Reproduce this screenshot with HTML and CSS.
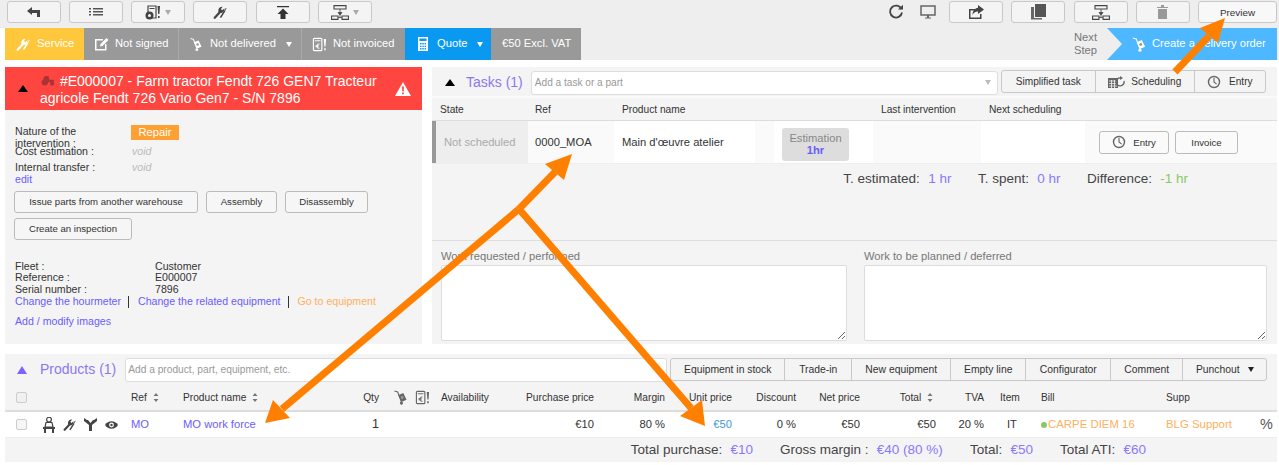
FILE: index.html
```html
<!DOCTYPE html>
<html lang="en">
<head>
    <meta charset="UTF-8">
    <title>Service E000007</title>
    <link rel="stylesheet" href="styles.css">
</head>
<body>
<svg class="defs" width="0" height="0">
    <symbol id="i-service" viewBox="0 0 16 16">
        <path d="M2 14.5 L8 8" fill="none" stroke="currentColor" stroke-width="2.6" stroke-linecap="round"/>
        <path d="M6.6 9 C5 5 7.5 1.5 11 2 L9 4.5 L10.5 6 L13 4 C13.5 7.5 10.5 10 6.6 9Z" fill="currentColor"/>
        <path d="M8.5 14.5 L13.5 6.5" fill="none" stroke="currentColor" stroke-width="1.8"/>
        <path d="M13.5 6.5 L15 3.5" fill="none" stroke="currentColor" stroke-width="1"/>
    </symbol>
    <symbol id="i-trolley" viewBox="1 0 14 16">
        <path d="M1.5 1 L5 2 L9 12.5" fill="none" stroke="currentColor" stroke-width="1.2"/>
        <path d="M5.5 5.5 L11 3.2 L14.5 10.5 L9 12.8Z" fill="currentColor"/>
        <circle cx="9.8" cy="8" r="1.5" fill="#999999"/>
        <circle cx="9" cy="14" r="1.7" fill="currentColor"/>
    </symbol>
    <symbol id="i-invoice" viewBox="0 0 16 16">
        <rect x="1.5" y="1.5" width="9" height="13" rx="1" fill="none" stroke="currentColor" stroke-width="1.2"/>
        <path d="M3 4 H9" stroke="currentColor"/>
        <path d="M8 7.5 A2.3 2.3 0 1 0 8 12 M3.8 9.2 H7 M3.8 10.4 H7" fill="none" stroke="currentColor"/>
        <path d="M12.5 2 H15 L14.4 10 H13.2Z M13 12 H14.6 V14 H13Z" fill="currentColor"/>
    </symbol>
    <symbol id="i-clock" viewBox="0 0 16 16">
        <circle cx="8" cy="8" r="6.3" fill="none" stroke="currentColor" stroke-width="1.6"/>
        <path d="M8 3.5 V8 L11 10.5" fill="none" stroke="currentColor" stroke-width="1.3"/>
    </symbol>
    <symbol id="i-flow" viewBox="0 0 18 15">
        <path d="M3 .6 H15 V4 H3Z M.6 11 H7 V14.4 H.6Z M11 11 H17.4 V14.4 H11Z" fill="none" stroke="currentColor" stroke-width="1.1"/>
        <path d="M9 4 V7 M7 7.5 H11 L9 10Z M9 10 V12.5 M7 12.5 H11" fill="currentColor" stroke="currentColor" stroke-width=".8"/>
    </symbol>
    <symbol id="i-sort" viewBox="0 0 6 9">
        <path d="M3 0 L5.5 3 H.5Z M3 9 L.5 6 H5.5Z" fill="currentColor"/>
    </symbol>
</svg>

<div class="toolbar">
    <button class="tool"><svg width="14" height="10" viewBox="0 0 14 10"><path d="M0 4 L5 0 V3 H13 V10 H10 V6 H5 V8Z" fill="#444"/></svg></button>
    <button class="tool"><svg width="14" height="8" viewBox="0 0 14 8"><path d="M0 0 H2 V1.5 H0Z M0 3 H2 V4.5 H0Z M0 6 H2 V7.5 H0Z M4 0 H14 V1.5 H4Z M4 3 H14 V4.5 H4Z M4 6 H14 V7.5 H4Z" fill="#555"/></svg></button>
    <button class="tool"><svg width="16" height="15" viewBox="0 0 16 15"><path d="M3 1 H11 V13 H3Z" fill="none" stroke="#444" stroke-width="1.2"/><path d="M4.5 3 H9.5 V4 H4.5Z M12.5 1 H15 L14.4 9 H13.2Z M13 11 H14.6 V13 H13Z" fill="#444"/><circle cx="4.5" cy="10.5" r="4" fill="#444"/><circle cx="4.5" cy="10.5" r="1.5" fill="#F4F4F4"/></svg><span class="caret"></span></button>
    <button class="tool"><svg class="ic-dark" width="14" height="14"><use href="#i-service"/></svg></button>
    <button class="tool"><svg width="12" height="13" viewBox="0 0 12 13"><path d="M0 0 H12 V1.2 H0Z M6 2.5 L11.5 8 H8.5 V13 H3.5 V8 H.5Z" fill="#333"/></svg></button>
    <button class="tool"><svg class="ic-dark" width="18" height="15"><use href="#i-flow"/></svg><span class="caret"></span></button>
    <div class="tool-right">
        <svg class="plain" width="16" height="16" viewBox="0 0 16 16"><path d="M13.5 5 A6 6 0 1 0 14 8.5" fill="none" stroke="#444" stroke-width="1.8"/><path d="M10 5.5 H15 V.8Z" fill="#444"/></svg>
        <svg class="plain" width="16" height="14" viewBox="0 0 16 14"><path d="M1 1 H15 V10 H1Z" fill="none" stroke="#666" stroke-width="1.5"/><path d="M5 12.5 H11 V13.5 H5Z M7 10 H9 V12.5 H7Z" fill="#666"/></svg>
        <button class="tool"><svg width="16" height="14" viewBox="0 0 16 14"><path d="M1 4 H7 V5.5 H2.5 V12.5 H12 V9 H13.5 V14 H1Z" fill="#444"/><path d="M10 0 L16 4.5 L10 9 V6.5 C7 6.5 5.5 8 4.5 10 C4.5 6 7 3 10 2.7Z" fill="#444"/></svg></button>
        <button class="tool"><svg width="17" height="16" viewBox="0 0 17 16"><path d="M5 0 H16 V13 H5Z" fill="#555"/><path d="M1 3 H4 V14 H12 V15.5 H1Z" fill="#666"/></svg></button>
        <button class="tool"><svg class="ic-dark" width="18" height="15"><use href="#i-flow"/></svg></button>
        <button class="tool"><svg width="11" height="14" viewBox="0 0 11 14"><path d="M0 2 H11 V3 H0Z M4 0 H7 V2 H4Z M1 4 H10 V14 H1Z" fill="#999"/></svg></button>
        <button class="tool tool-text">Preview</button>
    </div>
</div>

<div class="status">
    <div class="st st-service"><svg class="st-ic" width="14" height="14"><use href="#i-service"/></svg>Service</div>
    <div class="st st-sign"><svg class="st-ic" width="15" height="14" viewBox="0 0 15 14"><path d="M1 2 H9 V3.5 H2.5 V12 H11 V7 H12.5 V13.5 H1Z" fill="currentColor"/><path d="M6 9.5 L6.5 7 L12.5 1 L14.5 3 L8.5 9Z" fill="currentColor"/></svg>Not signed</div>
    <div class="st st-deliv"><svg class="st-ic" width="12" height="15"><use href="#i-trolley"/></svg>Not delivered<span class="caret-white"></span></div>
    <div class="st st-inv"><svg class="st-ic" width="15" height="15"><use href="#i-invoice"/></svg>Not invoiced</div>
    <div class="st st-quote"><svg class="st-ic" width="10" height="14" viewBox="0 0 10 14"><path d="M0 0 H10 V14 H0Z" fill="currentColor"/><path d="M1.5 1.5 H8.5 V4 H1.5Z M2 6 H3.5 V7.5 H2Z M4.3 6 H5.8 V7.5 H4.3Z M6.6 6 H8 V7.5 H6.6Z M2 8.7 H3.5 V10 H2Z M4.3 8.7 H5.8 V10 H4.3Z M6.6 8.7 H8 V10 H6.6Z M2 11 H3.5 V12.5 H2Z M4.3 11 H5.8 V12.5 H4.3Z M6.6 11 H8 V12.5 H6.6Z" fill="#0a99f0"/></svg>Quote<span class="caret-white"></span></div>
    <div class="st st-price">€50 Excl. VAT</div>
    <div class="next-label">Next<br>Step</div>
    <div class="next-step"><svg class="st-ic" width="14" height="15"><use href="#i-trolley"/></svg>Create a delivery order</div>
</div>

<div class="main">
    <section class="equip">
        <div class="equip-title">
            <span class="tri tri-black"></span>
            <h1><svg class="tractor" width="14" height="10" viewBox="0 0 15 11"><circle cx="4" cy="7" r="3.5" fill="#a33"/><circle cx="12" cy="8.5" r="2.3" fill="#a33"/><path d="M2 3 L4 0 H8 L9 4 H14 V7 H6Z" fill="#a33"/></svg> #E000007 - Farm tractor Fendt 726 GEN7 Tracteur agricole Fendt 726 Vario Gen7 - S/N 7896</h1>
            <svg class="warn" width="16" height="14" viewBox="0 0 16 14"><path d="M8 0 L16 14 H0Z" fill="#fff"/><path d="M7 4.5 H9 L8.7 9.5 H7.3Z M7.1 10.5 H8.9 V12.2 H7.1Z" fill="#ff4540"/></svg>
        </div>
        <div class="equip-body">
            <div class="info-row info-nature"><span class="info-label">Nature of the intervention :</span><span class="tag">Repair</span></div>
            <div class="info-row info-cost"><span class="info-label">Cost estimation :</span><em>void</em></div>
            <div class="info-row info-transfer"><span class="info-label">Internal transfer :</span><em>void</em></div>
            <a class="link edit" href="#">edit</a>
            <div class="btn-line">
                <button class="btn btn-issue">Issue parts from another warehouse</button>
                <button class="btn btn-assembly">Assembly</button>
                <button class="btn btn-disassembly">Disassembly</button>
            </div>
            <div class="btn-line">
                <button class="btn btn-inspect">Create an inspection</button>
            </div>
            <dl class="facts">
                <dt>Fleet :</dt><dd>Customer</dd>
                <dt>Reference :</dt><dd>E000007</dd>
                <dt>Serial number :</dt><dd>7896</dd>
            </dl>
            <div class="links">
                <a class="link" href="#">Change the hourmeter</a>
                <a class="link" href="#">Change the related equipment</a>
                <a class="link link-orange" href="#">Go to equipment</a>
            </div>
            <a class="link images" href="#">Add / modify images</a>
        </div>
    </section>

    <section class="tasks">
        <div class="tasks-head">
            <span class="tri tri-black"></span>
            <h2 class="section-title">Tasks (1)</h2>
            <div class="search search-task">Add a task or a part<span class="caret"></span></div>
            <div class="group">
                <button class="group-btn gb-simple">Simplified task</button>
                <button class="group-btn gb-sched"><svg class="ic-grey" width="17" height="12" viewBox="0 0 17 12"><path d="M0 2 H10 V12 H0Z" fill="currentColor"/><path d="M1 5 H9 M1 7.5 H9 M1 10 H9 M3.5 4 V12 M6.5 4 V12" stroke="#f4f4f4" stroke-width=".8"/><path d="M16 5 A4 4 0 1 1 13 2" fill="none" stroke="currentColor" stroke-width="1.4"/><path d="M12 0 L15 2 L12 4Z" fill="currentColor"/></svg>Scheduling</button>
                <button class="group-btn gb-entry"><svg class="ic-grey" width="14" height="14"><use href="#i-clock"/></svg>Entry</button>
            </div>
        </div>
        <div class="task-cols">
            <span>State</span><span>Ref</span><span>Product name</span><span></span><span></span><span>Last intervention</span><span>Next scheduling</span><span></span>
        </div>
        <div class="task-row">
            <div class="tc-state">Not scheduled</div>
            <div class="tc-ref">0000_MOA</div>
            <div class="tc-name">Main d'œuvre atelier</div>
            <div class="tc-gap"></div>
            <div class="tc-est"><div class="estimation">Estimation<strong>1hr</strong></div></div>
            <div class="tc-last"></div>
            <div class="tc-next"></div>
            <div class="tc-actions">
                <button class="btn btn-entry"><svg class="ic-grey" width="14" height="14"><use href="#i-clock"/></svg>Entry</button>
                <button class="btn btn-invoice">Invoice</button>
            </div>
        </div>
        <div class="task-totals">
            <span>T. estimated: <b class="val">1 hr</b></span>
            <span>T. spent: <b class="val">0 hr</b></span>
            <span>Difference: <b class="val val-green">-1 hr</b></span>
        </div>
        <div class="notes">
            <label class="note">Work requested / performed<textarea></textarea></label>
            <label class="note">Work to be planned / deferred<textarea></textarea></label>
        </div>
    </section>
</div>

<section class="products">
    <div class="products-head">
        <span class="tri tri-purple"></span>
        <h2 class="section-title">Products (1)</h2>
        <div class="search search-prod">Add a product, part, equipment, etc.</div>
        <div class="group group-prod">
            <button class="group-btn">Equipment in stock</button>
            <button class="group-btn">Trade-in</button>
            <button class="group-btn">New equipment</button>
            <button class="group-btn">Empty line</button>
            <button class="group-btn">Configurator</button>
            <button class="group-btn">Comment</button>
            <button class="group-btn">Punchout <span class="caret-black"></span></button>
        </div>
    </div>
    <div class="p-grid p-cols">
        <span class="check"></span>
        <span></span>
        <span>Ref <svg class="sort" width="6" height="9"><use href="#i-sort"/></svg></span>
        <span>Product name <svg class="sort" width="6" height="9"><use href="#i-sort"/></svg></span>
        <span class="r">Qty</span>
        <span class="p-icons"><svg class="ic-grey" width="13" height="15"><use href="#i-trolley"/></svg><svg class="ic-grey" width="15" height="15"><use href="#i-invoice"/></svg></span>
        <span>Availability</span>
        <span class="r">Purchase price</span>
        <span class="r">Margin</span>
        <span class="r">Unit price</span>
        <span class="r">Discount</span>
        <span class="r">Net price</span>
        <span class="r">Total <svg class="sort sort-total" width="6" height="9"><use href="#i-sort"/></svg></span>
        <span class="r">TVA</span>
        <span class="c-item">Item</span>
        <span>Bill</span>
        <span>Supp</span>
        <span></span>
    </div>
    <div class="p-grid p-row">
        <span class="check"></span>
        <span class="row-icons">
            <svg width="12" height="16" viewBox="0 0 12 16"><circle cx="6" cy="2.6" r="2.4" fill="none" stroke="#444" stroke-width="1.2"/><path d="M3 5.5 H9 L10 10 H2Z" fill="none" stroke="#444" stroke-width="1.2"/><path d="M0 10 H12 V12 H0Z M1 12 H3 V16 H1Z M9 12 H11 V16 H9Z" fill="#444"/></svg>
            <svg class="ic-dark" width="13" height="13"><use href="#i-service"/></svg>
            <svg width="13" height="13" viewBox="0 0 13 13"><path d="M5 13 H8 V7 L13 3 V0 L10 2 H9 L6.5 5 L4 2 H3 L0 0 V3 L5 7Z" fill="#444"/></svg>
            <svg width="13" height="8" viewBox="0 0 13 8"><path d="M0 4 C3 -1 10 -1 13 4 C10 9 3 9 0 4Z" fill="#444"/><circle cx="6.5" cy="4" r="2.4" fill="#fff"/><circle cx="6.5" cy="4" r="1.2" fill="#444"/></svg>
        </span>
        <a class="link" href="#">MO</a>
        <a class="link" href="#">MO work force</a>
        <span class="r qty">1</span>
        <span></span>
        <span></span>
        <span class="r">€10</span>
        <span class="r">80 %</span>
        <span class="r unit">€50</span>
        <span class="r">0 %</span>
        <span class="r">€50</span>
        <span class="r">€50</span>
        <span class="r">20 %</span>
        <span class="c-item c-it">IT</span>
        <span class="bill"><i class="dot"></i>CARPE DIEM 16</span>
        <span class="bill">BLG Support</span>
        <span class="pct">%</span>
    </div>
    <div class="p-totals">
        <span>Total purchase: <b class="val">€10</b></span>
        <span>Gross margin : <b class="val">€40 (80 %)</b></span>
        <span>Total: <b class="val">€50</b></span>
        <span>Total ATI: <b class="val">€60</b></span>
    </div>
</section>

<!-- annotation arrows drawn over the screenshot -->
<svg class="arrows" width="1279" height="465" viewBox="0 0 1279 465">
    <g stroke="#ff8000" stroke-width="7" fill="none">
        <path d="M1175 72 L1209 36"/>
        <path d="M519 209 L555 172"/>
        <path d="M519 209 L282 409"/>
        <path d="M519 209 L691 408"/>
    </g>
    <g fill="#ff8000">
        <path d="M1225 18 L1200 28 L1218 43Z"/>
        <path d="M572 154 L545 164 L564 180Z"/>
        <path d="M265 423 L273 400 L290 418Z"/>
        <path d="M705 426 L680 416 L702 400Z"/>
    </g>
</svg>
</body>
</html>
```

FILE: styles.css
```css
*{
    box-sizing: border-box;
    margin: 0;
    padding: 0;
    font-family: "Liberation Sans", Arial, sans-serif;
}
html,body{
    width: 1279px;
    height: 465px;
    overflow: hidden;
    background: #FFFFFF;
}
body{
    position: relative;
    font-size: 10.6px;
    line-height: 11.7px;
    color: #333333;
}
a{text-decoration: none;}
button{cursor: pointer;}
.defs{position: absolute;}

/* top toolbar */
.toolbar{
    display: flex;
    gap: 8.15px;
    height: 28px;
    padding: 1px 2px 0 7px;
    background: #EEEEEE;
}
.tool{
    display: flex;
    align-items: center;
    justify-content: center;
    gap: 4px;
    width: 54px;
    height: 22px;
    border: 1px solid #C8C8C8;
    border-radius: 3px;
    background: #F4F4F4;
}
.tool-right{
    display: flex;
    align-items: center;
    gap: 8.2px;
    margin-left: auto;
    height: 22px;
}
.plain{margin-right: 8px;}
.plain + .plain{margin-right: 5px;}
.tool-text{
    width: 79px;
    font-size: 9.9px;
    color: #333333;
    background: #F8F8F8;
}
.ic-dark{color: #444444;}
.ic-grey{color: #666666;}
.caret{
    display: inline-block;
    border-left: 3.5px solid transparent;
    border-right: 3.5px solid transparent;
    border-top: 5px solid #AAAAAA;
}

/* status line */
.status{
    display: flex;
    align-items: stretch;
    height: 32px;
    margin-left: 5px;
    background: #EEEEEE;
    font-size: 11.2px;
    color: #FFFFFF;
}
.st{
    display: flex;
    align-items: center;
    border-right: 1px solid #AAAAAA;
    background: #999999;
    white-space: nowrap;
}
.st-ic{
    flex: none;
    margin-right: 7px;
}
.st-service{width: 79px; padding-left: 11px; background: #FFC73B; border: none;}
.st-sign{width: 95px; padding-left: 10px;}
.st-sign .st-ic{margin-right: 6px;}
.st-deliv{width: 123px; padding-left: 11px;}
.st-deliv .st-ic{margin-right: 8px;}
.st-inv{width: 103px; padding-left: 10px; border: none;}
.st-inv .st-ic{margin-right: 6px;}
.st-quote{width: 86px; padding-left: 13px; background: #0A99F0; border: none;}
.st-quote .st-ic{margin-right: 9px;}
.st-price{width: 90px; padding-left: 11px; border: none;}
.caret-white{
    margin-left: 10px;
    border-left: 3.5px solid transparent;
    border-right: 3.5px solid transparent;
    border-top: 5px solid #FFFFFF;
}
.next-label{
    align-self: center;
    margin-left: auto;
    margin-right: 10px;
    font-size: 11.2px;
    line-height: 13px;
    color: #777777;
}
.next-step{
    display: flex;
    align-items: center;
    width: 170px;
    margin-right: 2px;
    padding-left: 25px;
    background: #4DB8FF;
    clip-path: polygon(0 0, 100% 0, 100% 100%, 0 100%, 15px 50%);
    white-space: nowrap;
}
.next-step .st-ic{margin-right: 6px;}

/* main two columns */
.main{
    display: flex;
    gap: 10px;
    height: 277px;
    margin: 7px 2px 0 5px;
}
.equip{
    flex: none;
    width: 417px;
    background: #F4F4F4;
}
.equip-title{
    display: flex;
    align-items: center;
    height: 43px;
    padding: 0 11px 0 13px;
    background: #FF4540;
    color: #FFFFFF;
}
.equip-title h1{
    flex: 1;
    margin-left: 12px;
    padding-top: 2px;
    font-size: 14px;
    font-weight: normal;
    line-height: 16.5px;
}
.tractor{margin: 0 1px 0 1px;}
.warn{margin-top: 1px;}
.tri{
    flex: none;
    width: 0;
    height: 0;
    border-left: 5px solid transparent;
    border-right: 5px solid transparent;
    border-bottom: 7px solid #000000;
}
.tri-purple{border-bottom-color: #7A63FF;}

.equip-body{padding: 16px 10px 0;}
.info-row{
    display: flex;
    align-items: flex-start;
}
.info-label{
    flex: none;
    width: 90px;
    margin-right: 26px;
}
.info-nature{height: 20px;}
.info-cost{height: 16px;}
.info-transfer{height: 12px;}
.info-row em{
    margin-left: 1px;
    color: #BBBBBB;
}
.tag{
    width: 48px;
    height: 15px;
    margin-top: -1px;
    background: #FFA033;
    color: #FFFFFF;
    font-size: 11.2px;
    line-height: 14px;
    text-align: center;
}
.link{color: #6A5CFF;}
.link-orange{color: #FFB060;}
.edit{display: block; margin-bottom: 5px;}
.btn{
    display: inline-flex;
    align-items: center;
    justify-content: center;
    height: 22px;
    border: 1px solid #BBBBBB;
    border-radius: 3px;
    background: #F6F6F6;
    font-size: 9.6px;
    color: #333333;
}
.btn-line{
    display: flex;
    gap: 8px;
    margin-bottom: 5px;
    margin-left: -1px;
}
.btn-issue{width: 184px;}
.btn-assembly{width: 71px;}
.btn-disassembly{width: 83px;}
.btn-inspect{width: 118px;}
.facts{
    display: grid;
    grid-template-columns: 140px 1fr;
    margin-top: 21px;
}
.facts dd{margin: 0;}
.links{
    display: flex;
    gap: 9px;
}
.links .link:not(:last-child){
    padding-right: 7px;
    border-right: 1px solid #333333;
}
.images{
    display: block;
    margin-top: 8px;
}

/* tasks */
.tasks{
    flex: 1;
    background: #F4F4F4;
}
.tasks-head{
    display: flex;
    align-items: center;
    height: 31px;
    padding-top: 2px;
    border-bottom: 2px solid #FAFAFA;
}
.tasks-head .tri{margin-left: 13px;}
.section-title{
    font-size: 14px;
    font-weight: normal;
    color: #8C78F0;
    white-space: nowrap;
}
.tasks-head .section-title{margin-left: 11px;}
.search{
    display: flex;
    align-items: center;
    justify-content: space-between;
    border: 1px solid #DDDDDD;
    border-radius: 3px;
    background: #FFFFFF;
    font-size: 10.1px;
    color: #999999;
}
.search-task{
    width: 467px;
    height: 24px;
    margin-left: 8px;
    padding: 0 3px;
}
.search-task .caret{margin-right: 3px; border-top-color: #BBBBBB;}
.group{
    display: flex;
    height: 23px;
    margin-left: 3px;
    border: 1px solid #C8C8C8;
    border-radius: 3px;
    background: #F4F4F4;
}
.tasks-head .group{margin-top: -2px;}
.group-btn{
    display: flex;
    align-items: center;
    justify-content: center;
    gap: 6px;
    padding: 0 14.5px;
    border: none;
    border-right: 1px solid #C8C8C8;
    background: transparent;
    font-size: 10.1px;
    color: #333333;
    white-space: nowrap;
}
.group-btn:last-child{border-right: none;}
.gb-simple{width: 94px; padding: 0;}
.gb-sched{width: 99px; padding: 0;}
.gb-entry{width: 70px; padding: 0; gap: 8px;}

.task-cols,
.task-row{
    display: grid;
    grid-template-columns: 96px 86px 141px 19px 99px 108px 104px 1fr;
}
.task-cols{
    height: 23px;
    align-items: center;
    padding-top: 2px;
    border-bottom: 1px solid #DDDDDD;
    font-size: 10.2px;
    color: #333333;
}
.task-cols span:nth-child(1){padding-left: 8px;}
.task-cols span:nth-child(2){padding-left: 7px;}
.task-cols span:nth-child(3){padding-left: 8px;}
.task-cols span:nth-child(6),
.task-cols span:nth-child(7){padding-left: 8px; white-space: nowrap;}
.task-row{
    height: 43px;
    align-items: center;
    background: #FFFFFF;
    border-bottom: 1px solid #EEEEEE;
    font-size: 11.2px;
}
.task-row > div{
    display: flex;
    align-items: center;
    height: 100%;
    white-space: nowrap;
}
.tc-state{
    padding: 1px 0 0 8px;
    border-left: 4px solid #999999;
    background: #EEEEEE;
    color: #AAAAAA;
}
.tc-ref{padding: 1px 0 0 7px; background: #FAFAFA;}
.tc-name{padding: 1px 0 0 8px;}
.tc-gap,
.tc-last,
.tc-actions{background: #FAFAFA;}
.tc-est{padding: 4px 0 0 8px;}
.estimation{
    width: 67px;
    height: 33px;
    padding-top: 4px;
    border-radius: 3px;
    background: #DDDDDD;
    color: #888888;
    line-height: 12px;
    text-align: center;
}
.estimation strong{
    display: block;
    color: #6A5CFF;
}
.tc-actions{
    gap: 6px;
    padding-left: 14px;
}
.btn-entry{width: 70px; height: 23px; gap: 7px; background: #FAFAFA;}
.btn-invoice{width: 63px; height: 23px; background: #FAFAFA;}

.task-totals{
    display: flex;
    justify-content: flex-end;
    gap: 26.5px;
    height: 77px;
    padding: 8px 89px 0 0;
    border-bottom: 1px solid #DDDDDD;
    font-size: 13.5px;
    line-height: 14px;
    color: #444444;
}
.val{
    margin-left: 4.5px;
    font-weight: normal;
    color: #8A78FF;
}
.val-green{color: #8AC864;}
.notes{
    display: grid;
    grid-template-columns: 406px 403px;
    gap: 17px;
    padding: 10px 0 0 9px;
}
.note{
    display: block;
    font-size: 11.2px;
    color: #777777;
}
.note textarea{
    display: block;
    width: 100%;
    height: 76px;
    margin-top: 2px;
    border: 1px solid #DDDDDD;
    border-radius: 2px;
    background: #FFFFFF;
}

/* products */
.products{
    margin: 10px 2px 0 5px;
    background: #F4F4F4;
}
.products-head{
    display: flex;
    align-items: center;
    height: 31px;
}
.products-head .tri{margin-left: 12px; border-bottom-width: 8px;}
.products-head .section-title{margin-left: 13px;}
.search-prod{
    width: 542px;
    height: 24px;
    margin-left: 9px;
    padding: 0 2px;
    font-size: 10.2px;
    color: #999999;
}
.group-prod{margin-left: 3px; background: #F4F4F4;}
.group-prod .group-btn{font-size: 10.35px; padding: 0;}
.group-prod .group-btn:nth-child(1){width: 114px;}
.group-prod .group-btn:nth-child(2){width: 67px;}
.group-prod .group-btn:nth-child(3){width: 99px;}
.group-prod .group-btn:nth-child(4){width: 75px;}
.group-prod .group-btn:nth-child(5){width: 85px;}
.group-prod .group-btn:nth-child(6){width: 72px;}
.group-prod .group-btn:nth-child(7){width: 83px;}
.caret-black{
    margin-left: 2px;
    border-left: 3.5px solid transparent;
    border-right: 3.5px solid transparent;
    border-top: 5px solid #222222;
}

.p-grid{
    display: grid;
    grid-template-columns: 38px 88px 52px 157px 39px 62px 79px 74px 71px 67px 64px 64px 76px 48px 57px 125px 94px 17px;
    align-items: center;
}
.p-cols{
    height: 27px;
    border-bottom: 2px solid #DDDDDD;
    font-size: 10.2px;
    color: #333333;
}
.p-row{
    height: 26px;
    border-bottom: 1px solid #EEEEEE;
    background: #FFFFFF;
    font-size: 11.2px;
}
.r{text-align: right; white-space: nowrap;}
.sort{color: #777777; margin-left: 3px; vertical-align: -1px;}
.sort-total{margin: 0 3px 0 3px;}
.check{
    width: 11px;
    height: 11px;
    margin-left: 11px;
    border: 1px solid #CCCCCC;
    border-radius: 2px;
    background: #F6F6F6;
}
.p-cols .check{background: #F0F0F0;}
.p-icons{
    display: flex;
    gap: 8px;
    padding-left: 15px;
}
.row-icons{
    display: flex;
    align-items: center;
    gap: 8px;
}
.qty{font-size: 12.6px;}
.unit{color: #3C9AD8;}
.c-item{padding-left: 16px;}
.c-it{padding-left: 23px;}
.bill{
    color: #FFB060;
    font-size: 11.4px;
    white-space: nowrap;
}
.dot{
    display: inline-block;
    width: 6px;
    height: 6px;
    margin-right: 1px;
    border-radius: 50%;
    background: #8AC864;
}
.pct{font-size: 14.4px; color: #555555;}
.p-totals{
    display: flex;
    justify-content: flex-end;
    gap: 27px;
    height: 24px;
    padding: 5px 131px 0 0;
    font-size: 13.5px;
    line-height: 14px;
    color: #444444;
}

/* annotation layer */
.arrows{
    position: absolute;
    top: 0;
    left: 0;
    pointer-events: none;
}
```
